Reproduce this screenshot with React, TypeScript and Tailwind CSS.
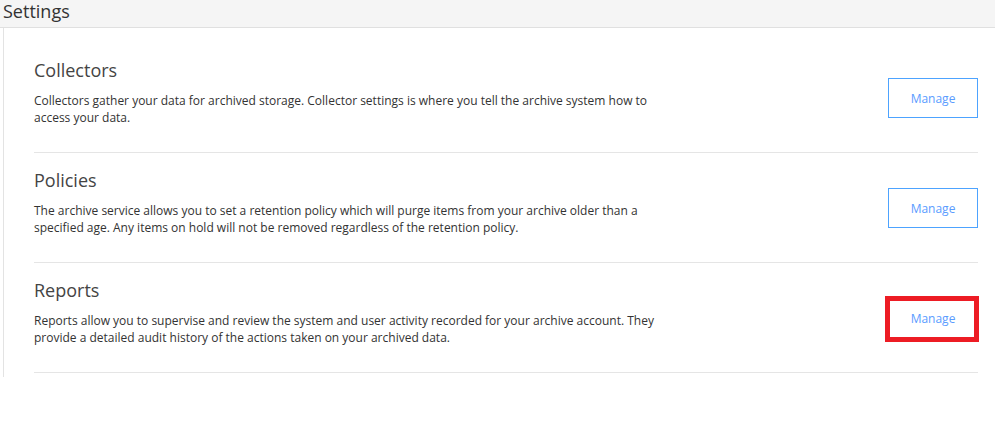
const sections = [
  {
    title: "Collectors",
    lines: [
      "Collectors gather your data for archived storage. Collector settings is where you tell the archive system how to",
      "access your data.",
    ],
  },
  {
    title: "Policies",
    lines: [
      "The archive service allows you to set a retention policy which will purge items from your archive older than a",
      "specified age. Any items on hold will not be removed regardless of the retention policy.",
    ],
  },
  {
    title: "Reports",
    lines: [
      "Reports allow you to supervise and review the system and user activity recorded for your archive account. They",
      "provide a detailed audit history of the actions taken on your archived data.",
    ],
    highlight: true,
  },
];

function ManageButton({ highlight }: { highlight?: boolean }) {
  return (
    <div className="relative mt-[20px] shrink-0">
      <button
        type="button"
        className="w-[90px] h-[40px] pt-[2px] border border-[#4da3ff] bg-white text-[12px] text-[#5a9cff]"
      >
        Manage
      </button>
      {highlight && (
        <div className="absolute left-[-3px] top-[-2px] w-[94px] h-[46px] border-[5px] border-[#ed1c24]" />
      )}
    </div>
  );
}

export default function App() {
  return (
    <div className="w-[995px] h-[432px] bg-white font-['Open_Sans',sans-serif]">
      <div className="h-[28px] bg-[#f5f5f5] border-b border-[#e0e0e0] px-[3px]">
        <h1 className="text-[18px] leading-[22px] text-[#333]">Settings</h1>
      </div>
      <div className="ml-[3px] border-l border-[#e3e3e3] pl-[30px] pr-[17px] pt-[15px] pb-[4px]">
        {sections.map((s) => (
          <div
            key={s.title}
            className="flex justify-between border-b border-[#e5e5e5] pt-[15px] pb-[26px]"
          >
            <div>
              <h2 className="text-[18px] leading-[24px] text-[#444]">{s.title}</h2>
              <p className="mt-[10px] text-[12px] leading-[17px] text-[#333] whitespace-nowrap">
                {s.lines[0]}
                <br />
                {s.lines[1]}
              </p>
            </div>
            <ManageButton highlight={s.highlight} />
          </div>
        ))}
      </div>
    </div>
  );
}
